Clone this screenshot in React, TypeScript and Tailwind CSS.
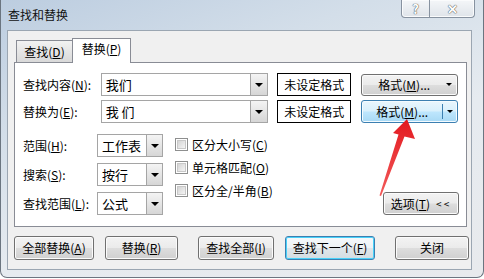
import React from "react";

const btn =
  "flex items-center justify-center rounded-[3px] border border-[#707070] bg-[linear-gradient(to_bottom,#f3f3f3_0%,#ebebeb_48%,#dddddd_52%,#d0d0d0_100%)] shadow-[inset_0_0_0_1px_#fbfbfb]";

const inputBox = "flex items-center border border-[#a5a5a5] bg-white";

function DropBtn({ w = 17 }: { w?: number }) {
  return (
    <div
      className="ml-auto flex h-full items-center justify-center border-l border-[#a5a5a5] bg-[linear-gradient(to_bottom,#f4f4f4,#d6d6d6)]"
      style={{ width: w }}
    >
      <span className="block h-0 w-0 border-x-[4px] border-t-[4px] border-x-transparent border-t-black" />
    </div>
  );
}

function Checkbox({ children }: { children: React.ReactNode }) {
  return (
    <div className="flex h-[13px] items-center">
      <div className="flex h-[13px] w-[13px] items-center justify-center border border-[#8e8f8f] bg-white">
        <div className="h-[9px] w-[9px] border border-[#c8c8c8] bg-[linear-gradient(135deg,#d4d4d4,#f4f4f4)]" />
      </div>
      <span className="ml-[4px] leading-[13px]">{children}</span>
    </div>
  );
}

export default function App() {
  return (
    <div className="relative h-[279px] w-[484px] overflow-hidden bg-white font-['Noto_Sans_CJK_SC',sans-serif] text-[12px] text-black">
      <div className="flex h-[278px] w-[484px] flex-col rounded-b-[7px] border border-t-0 border-[#6b7580] bg-[linear-gradient(160deg,#bccde0_0%,#d3dee9_30%,#e6ebf0_60%,#e8eaed_100%)]">
        {/* title bar */}
        <div className="flex h-[30px] shrink-0">
          <div className="pl-[7px] pt-[7px] leading-[16px] text-[#111]">查找和替换</div>
          <div className="ml-auto mr-[8px] flex h-[18px] overflow-hidden rounded-b-[4px] border border-t-0 border-[#8792a0] bg-[linear-gradient(to_bottom,#f4f6f8,#dfe4ea)] shadow-[inset_0_0_0_1px_#fafbfc]">
            <div className="flex w-[28px] items-center justify-center border-r border-[#8792a0] text-[13px] font-bold leading-none text-white [text-shadow:0_0_1px_#444,0_0_1px_#444]">
              ?
            </div>
            <div className="flex w-[44px] items-center justify-center text-[13px] font-bold leading-none text-white [text-shadow:0_0_1px_#444,0_0_1px_#444]">
              ✕
            </div>
          </div>
        </div>

        {/* client area */}
        <div className="ml-[6px] h-[240px] w-[465px] border border-[#9ba6b2] bg-[#f0f0f0]">
          {/* tabs */}
          <div className="flex items-end pl-[6px] pt-[7px]">
            <div className="ml-[2px] flex h-[22px] w-[56px] items-center justify-center border-l border-t border-[#898c95] bg-[linear-gradient(to_bottom,#f2f2f2,#d9d9d9)] leading-none">
              查找(<u>D</u>)
            </div>
            <div className="relative z-10 -mb-px flex h-[25px] w-[59px] items-start justify-center border-x border-t border-[#898c95] bg-white pt-[4px] leading-none">
              替换(<u>P</u>)
            </div>
          </div>

          {/* panel */}
          <div className="ml-[6px] h-[165px] w-[453px] border border-[#898c95] bg-white px-[8px] pt-[10px]">
            <div className="flex h-[23px] items-center">
              <div className="w-[78px]">
                查找内容(<u>N</u>):
              </div>
              <div className={`${inputBox} h-[23px] w-[168px]`}>
                <span className="pl-[4px] text-[13px]">我们</span>
                <DropBtn />
              </div>
              <div className="ml-[9px] flex h-[23px] w-[75px] items-center justify-center border border-black bg-white">
                未设定格式
              </div>
              <div className={`${btn} ml-[10px] h-[22px] w-[97px]`}>
                <span className="flex-1 text-center">
                  格式(<u>M</u>)...
                </span>
                <span className="mr-[5px] block h-0 w-0 border-x-[3px] border-t-[3px] border-x-transparent border-t-black" />
              </div>
            </div>
            <div className="mt-[4px] flex h-[23px] items-center">
              <div className="w-[78px]">
                替换为(<u>E</u>):
              </div>
              <div className={`${inputBox} h-[23px] w-[168px]`}>
                <span className="pl-[4px] text-[13px]">我 们</span>
                <DropBtn />
              </div>
              <div className="ml-[9px] flex h-[23px] w-[75px] items-center justify-center border border-black bg-white">
                未设定格式
              </div>
              <div className="ml-[10px] flex h-[23px] w-[97px] items-center rounded-[3px] border border-[#3c7fb1] bg-[linear-gradient(to_bottom,#eaf6fd_0%,#d9f0fc_48%,#bee6fd_52%,#a7d9f5_100%)] shadow-[inset_0_0_0_1px_#f4fbff]">
                <span className="flex-1 text-center">
                  格式(<u>M</u>)...
                </span>
                <span className="flex h-[15px] items-center border-l border-[#3c7fb1] px-[4px]">
                  <span className="block h-0 w-0 border-x-[3px] border-t-[3px] border-x-transparent border-t-black" />
                </span>
              </div>
            </div>

            <div className="mt-[11px] flex">
              <div className="flex flex-col gap-[6px]">
                {[
                  ["范围(", "H", "):", "工作表"],
                  ["搜索(", "S", "):", "按行"],
                  ["查找范围(", "L", "):", "公式"],
                ].map(([a, k, b, v]) => (
                  <div key={k} className="flex h-[23px] items-center">
                    <div className="w-[74px]">
                      {a}
                      <u>{k}</u>
                      {b}
                    </div>
                    <div className={`${inputBox} h-[23px] w-[66px] border-[#8e8e8e]`}>
                      <span className="pl-[4px] text-[13px]">{v}</span>
                      <DropBtn w={16} />
                    </div>
                  </div>
                ))}
              </div>
              <div className="ml-[12px] mt-[4px] flex flex-col gap-[10px]">
                <Checkbox>
                  区分大小写(<u>C</u>)
                </Checkbox>
                <Checkbox>
                  单元格匹配(<u>O</u>)
                </Checkbox>
                <Checkbox>
                  区分全/半角(<u>B</u>)
                </Checkbox>
              </div>
              <div className={`${btn} ml-auto mr-[-1px] mt-[58px] h-[23px] w-[76px] gap-[6px]`}>
                <span>
                  选项(<u>T</u>)
                </span>
                <span className="text-[10px] tracking-[2px]">&lt;&lt;</span>
              </div>
            </div>
          </div>

          {/* bottom buttons */}
          <div className="mt-[9px] flex h-[24px]">
            <div className={`${btn} ml-[6px] w-[80px]`}>
              全部替换(<u>A</u>)
            </div>
            <div className={`${btn} ml-[11px] w-[73px]`}>
              替换(<u>R</u>)
            </div>
            <div className={`${btn} ml-[20px] w-[76px]`}>
              查找全部(<u>I</u>)
            </div>
            <div className="ml-[11px] flex w-[90px] items-center justify-center rounded-[3px] border border-[#3c7fb1] bg-[linear-gradient(to_bottom,#f6f9fb_0%,#edf2f5_48%,#e0e6ea_52%,#d3dde2_100%)] shadow-[inset_0_0_0_1px_#48d1f9]">
              查找下一个(<u>F</u>)
            </div>
            <div className={`${btn} ml-[20px] w-[74px]`}>关闭</div>
          </div>
        </div>
      </div>

      {/* red arrow */}
      <svg className="pointer-events-none absolute left-0 top-0" width="484" height="279">
        <defs>
          <linearGradient id="ar" x1="0" y1="1" x2="0" y2="0">
            <stop offset="0" stopColor="#f25a5a" />
            <stop offset="1" stopColor="#e3191f" />
          </linearGradient>
        </defs>
        <polygon
          points="407,119 415,139 404.5,136.5 381,196 379.5,195.5 398.5,134.5 393,133"
          fill="url(#ar)"
        />
      </svg>
    </div>
  );
}
